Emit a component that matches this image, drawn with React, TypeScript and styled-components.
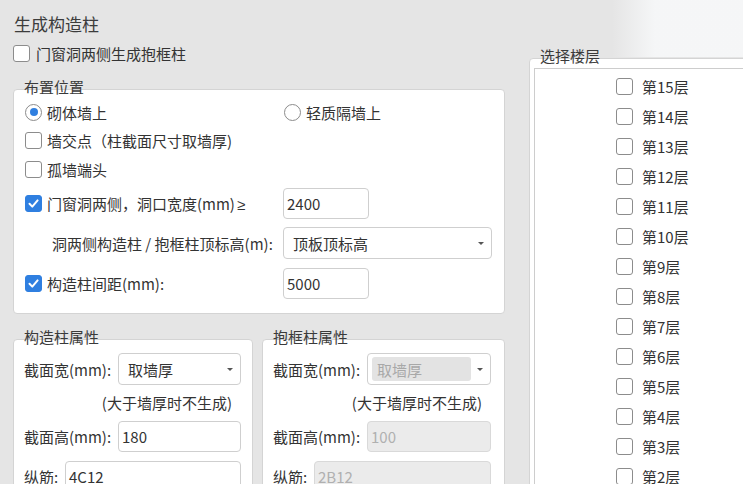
import styled, { createGlobalStyle } from 'styled-components';

const GlobalStyle = createGlobalStyle`
  html, body {
    margin: 0;
    padding: 0;
  }
  body {
    font-family: "Noto Sans CJK SC", "Noto Sans", "Liberation Sans", sans-serif;
    color: #333;
    font-size: 15px;
  }
`;

const floors = [15, 14, 13, 12, 11, 10, 9, 8, 7, 6, 5, 4, 3, 2, 1];

export default function App() {
  return (
    <Page>
      <GlobalStyle />
      <LeftColumn>
        <Title>生成构造柱</Title>
        <TopRow>
          <Check />
          <span>门窗洞两侧生成抱框柱</span>
        </TopRow>

        <Group>
          <Legend $top={13}>布置位置</Legend>
          <PlaceBox>
            <Row $h={28}>
              <LeftCell>
                <Radio checked />
                <span>砌体墙上</span>
              </LeftCell>
              <Option>
                <Radio />
                <span>轻质隔墙上</span>
              </Option>
            </Row>
            <Row $h={29}>
              <LeftCell>
                <Check />
                <span>墙交点（柱截面尺寸取墙厚)</span>
              </LeftCell>
            </Row>
            <Row $h={28}>
              <LeftCell>
                <Check />
                <span>孤墙端头</span>
              </LeftCell>
            </Row>
            <Row $h={40}>
              <LeftCell>
                <Check checked />
                <span>
                  门窗洞两侧，洞口宽度(mm)<Sym>≥</Sym>
                </span>
              </LeftCell>
              <Input $w={86}>2400</Input>
            </Row>
            <Row $h={40}>
              <LeftCell $indent={27}>洞两侧构造柱 / 抱框柱顶标高(m):</LeftCell>
              <Select $w={209}>
                <SelectText>顶板顶标高</SelectText>
                <Arrow />
              </Select>
            </Row>
            <Row $h={40}>
              <LeftCell>
                <Check checked />
                <span>构造柱间距(mm):</span>
              </LeftCell>
              <Input $w={86}>5000</Input>
            </Row>
          </PlaceBox>
        </Group>

        <PropsRow>
          <Group $w={240}>
            <Legend $top={0}>构造柱属性</Legend>
            <PropBox>
              <FieldRow $h={32}>
                <FieldLabel $w={94}>截面宽(mm):</FieldLabel>
                <Select $grow>
                  <SelectText>取墙厚</SelectText>
                  <Arrow />
                </Select>
              </FieldRow>
              <Note>(大于墙厚时不生成)</Note>
              <FieldRow $h={31}>
                <FieldLabel $w={94}>截面高(mm):</FieldLabel>
                <Input $grow>180</Input>
              </FieldRow>
              <FieldRow $h={31} $gap={9}>
                <FieldLabel $w={41}>纵筋:</FieldLabel>
                <Input $grow>4C12</Input>
              </FieldRow>
            </PropBox>
          </Group>

          <Group $w={243}>
            <Legend $top={0}>抱框柱属性</Legend>
            <PropBox $right={13}>
              <FieldRow $h={32}>
                <FieldLabel $w={94}>截面宽(mm):</FieldLabel>
                <Select $grow>
                  <SelectText $disabled>取墙厚</SelectText>
                  <Arrow />
                </Select>
              </FieldRow>
              <Note>(大于墙厚时不生成)</Note>
              <FieldRow $h={31}>
                <FieldLabel $w={94}>截面高(mm):</FieldLabel>
                <Input $grow $disabled>100</Input>
              </FieldRow>
              <FieldRow $h={31} $gap={9}>
                <FieldLabel $w={41}>纵筋:</FieldLabel>
                <Input $grow $disabled>2B12</Input>
              </FieldRow>
            </PropBox>
          </Group>
        </PropsRow>
      </LeftColumn>

      <RightColumn>
        <Legend $top={0}>选择楼层</Legend>
        <FloorBox>
          <FloorList>
            {floors.map((f) => (
              <FloorItem key={f}>
                <Check />
                <span>第{f}层</span>
              </FloorItem>
            ))}
          </FloorList>
        </FloorBox>
      </RightColumn>
    </Page>
  );
}

function Check({ checked }: { checked?: boolean }) {
  return (
    <CheckBox $checked={checked}>
      {checked && (
        <svg width="13" height="13" viewBox="0 0 13 13">
          <polyline
            points="2.5,6.8 5.3,9.6 10.6,3.4"
            fill="none"
            stroke="#fff"
            strokeWidth="2"
            strokeLinecap="round"
            strokeLinejoin="round"
          />
        </svg>
      )}
    </CheckBox>
  );
}

function Radio({ checked }: { checked?: boolean }) {
  return <RadioCircle>{checked && <RadioDot />}</RadioCircle>;
}

const Page = styled.div`
  display: flex;
  height: 484px;
  overflow: hidden;
  background:
    linear-gradient(90deg, rgba(246, 247, 248, 0) 612px, rgba(246, 247, 248, 0.95) 655px) top left / 100% 57px no-repeat,
    #e5e5e5;
`;

const LeftColumn = styled.div`
  width: 492px;
  margin-left: 13px;
  display: flex;
  flex-direction: column;
  flex: none;
`;

const Title = styled.div`
  padding: 12px 0 0 1px;
  line-height: 24px;
  font-size: 17px;
  color: #3c3c3c;
`;

const TopRow = styled.div`
  display: flex;
  align-items: center;
  gap: 6px;
  height: 28px;
  margin-top: 7px;
`;

const Sym = styled.span`
  font-family: "Liberation Sans", sans-serif;
  margin-left: 2px;
`;

const Group = styled.div<{ $w?: number }>`
  display: flex;
  flex-direction: column;
  width: ${(p) => (p.$w ? `${p.$w}px` : 'auto')};
  flex: none;
`;

const Legend = styled.div<{ $top: number }>`
  position: relative;
  z-index: 1;
  margin-top: ${(p) => p.$top}px;
  margin-bottom: -8px;
  padding-left: 11px;
  line-height: 20px;
  font-size: 15px;
  color: #3a3a3a;
`;

const PlaceBox = styled.div`
  background: #fff;
  border: 1px solid #d4d4d4;
  border-radius: 4px;
  padding: 8px 0 10px 11px;
  display: flex;
  flex-direction: column;
`;

const Row = styled.div<{ $h: number }>`
  display: flex;
  align-items: center;
  height: ${(p) => p.$h}px;
`;

const LeftCell = styled.div<{ $indent?: number }>`
  width: ${(p) => 258 - (p.$indent || 0)}px;
  padding-left: ${(p) => p.$indent || 0}px;
  display: flex;
  align-items: center;
  gap: 5px;
  flex: none;
  white-space: nowrap;
`;

const Option = styled.div`
  display: flex;
  align-items: center;
  gap: 5px;
  margin-left: 1px;
`;

const CheckBox = styled.span<{ $checked?: boolean }>`
  width: 17px;
  height: 17px;
  box-sizing: border-box;
  border-radius: 3px;
  border: 1px solid ${(p) => (p.$checked ? '#2f7fe0' : '#8c8c8c')};
  background: ${(p) => (p.$checked ? '#2f7fe0' : '#fff')};
  display: inline-flex;
  align-items: center;
  justify-content: center;
  flex: none;
`;

const RadioCircle = styled.span`
  width: 17px;
  height: 17px;
  box-sizing: border-box;
  border-radius: 50%;
  border: 1px solid #8c8c8c;
  background: #fff;
  display: inline-flex;
  align-items: center;
  justify-content: center;
  flex: none;
`;

const RadioDot = styled.span`
  width: 8px;
  height: 8px;
  border-radius: 50%;
  background: #2f7fe0;
`;

const Input = styled.div<{ $w?: number; $grow?: boolean; $disabled?: boolean }>`
  box-sizing: border-box;
  width: ${(p) => (p.$w ? `${p.$w}px` : 'auto')};
  flex: ${(p) => (p.$grow ? '1' : 'none')};
  height: 31px;
  border: 1px solid ${(p) => (p.$disabled ? '#d9d9d9' : '#cfcfcf')};
  border-radius: 4px;
  background: ${(p) => (p.$disabled ? '#ebebeb' : '#fff')};
  color: ${(p) => (p.$disabled ? '#b0b0b0' : '#333')};
  display: flex;
  align-items: center;
  padding-left: 3px;
  font-size: 15px;
`;

const Select = styled.div<{ $w?: number; $grow?: boolean }>`
  box-sizing: border-box;
  width: ${(p) => (p.$w ? `${p.$w}px` : 'auto')};
  flex: ${(p) => (p.$grow ? '1' : 'none')};
  height: 32px;
  border: 1px solid #cfcfcf;
  border-radius: 4px;
  background: #fff;
  display: flex;
  align-items: center;
  padding: 3px 0 3px 4px;
  gap: 6px;
`;

const SelectText = styled.div<{ $disabled?: boolean }>`
  flex: 1;
  align-self: stretch;
  display: flex;
  align-items: center;
  padding-left: 5px;
  border-radius: 3px;
  background: ${(p) => (p.$disabled ? '#e3e3e3' : 'transparent')};
  color: ${(p) => (p.$disabled ? '#a8a8a8' : '#333')};
`;

const Arrow = styled.span`
  width: 0;
  height: 0;
  border-left: 3px solid transparent;
  border-right: 3px solid transparent;
  border-top: 3px solid #555;
  margin-right: 7px;
  flex: none;
`;

const PropsRow = styled.div`
  display: flex;
  gap: 9px;
  margin-top: 13px;
`;

const PropBox = styled.div<{ $right?: number }>`
  background: #fff;
  border: 1px solid #d4d4d4;
  border-radius: 4px;
  padding: 13px ${(p) => p.$right ?? 11}px 20px 10px;
  display: flex;
  flex-direction: column;
`;

const FieldRow = styled.div<{ $h: number; $gap?: number }>`
  display: flex;
  align-items: center;
  height: ${(p) => p.$h}px;
  margin-top: ${(p) => p.$gap || 0}px;
`;

const FieldLabel = styled.span<{ $w: number }>`
  width: ${(p) => p.$w}px;
  flex: none;
  white-space: nowrap;
`;

const Note = styled.div`
  height: 36px;
  line-height: 36px;
  text-align: right;
  padding-right: 9px;
`;

const RightColumn = styled.div`
  flex: 1;
  margin-left: 24px;
  padding-top: 46px;
  display: flex;
  flex-direction: column;
`;

const FloorBox = styled.div`
  flex: 1;
  margin-right: -12px;
  background: #fff;
  border: 1px solid #d4d4d4;
  border-radius: 4px;
  padding: 9px 0 0 4px;
  display: flex;
`;

const FloorList = styled.div`
  flex: 1;
  border: 1px solid #cdcdcd;
  padding: 2px 0 0 81px;
  display: flex;
  flex-direction: column;
`;

const FloorItem = styled.div`
  display: flex;
  align-items: center;
  gap: 9px;
  height: 30px;
  flex: none;
`;
